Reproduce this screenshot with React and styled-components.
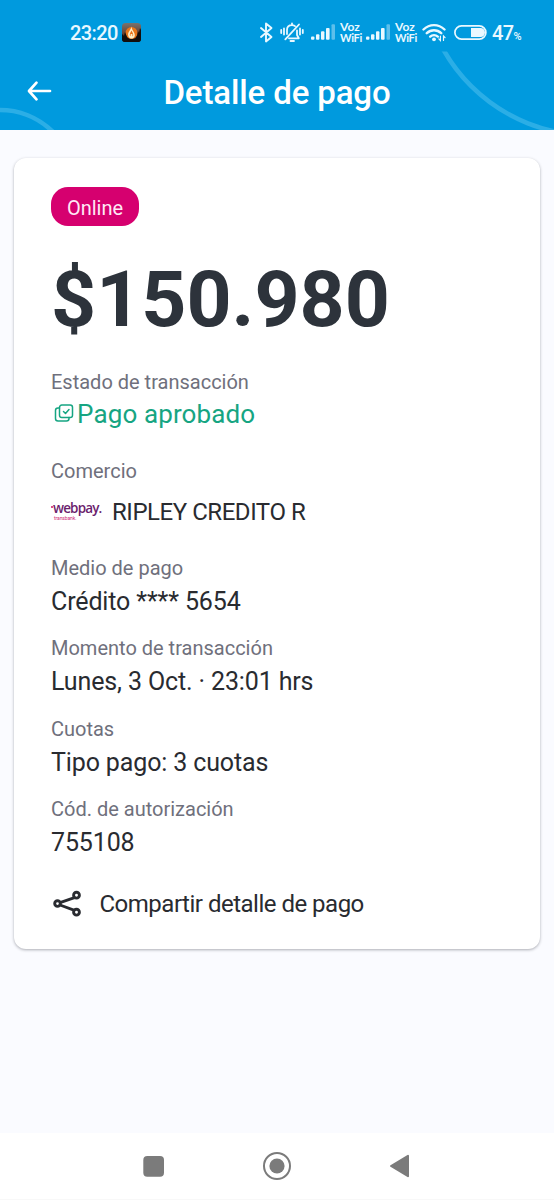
import React from "react";
import styled, { createGlobalStyle } from "styled-components";

const GlobalStyle = createGlobalStyle`
  * { box-sizing: border-box; }
  body { margin: 0; background: #fafbff; font-family: Roboto, "Liberation Sans", sans-serif; }
`;

const Screen = styled.div`
  width: 554px;
  height: 1200px;
  display: flex;
  flex-direction: column;
  overflow: hidden;
  background: #fafbff;
`;

const Header = styled.header`
  position: relative;
  height: 130px;
  flex: none;
  color: #fff;
  background: #009ade;
`;

const Decoration = styled.svg`
  position: absolute;
  inset: 0;
`;

const StatusBar = styled.div`
  position: relative;
  height: 52px;
  padding: 12px 27px 0 70px;
  display: flex;
  align-items: center;
  color: #e9f8ff;
`;

const Clock = styled.span`
  width: 52px;
  padding-top: 1px;
  font-size: 20px;
  font-weight: 500;
  line-height: 24px;
  letter-spacing: -0.6px;
`;

const StatusIcons = styled.div`
  margin-left: auto;
  display: flex;
  align-items: center;
`;

const Glyph = styled.svg`
  display: block;
  flex: none;
  margin-left: ${(p) => p.$gap || 0}px;
`;

const Voice = styled.span`
  width: 23px;
  margin-left: 4px;
  display: flex;
  flex-direction: column;
  font-family: Lato, sans-serif;
  white-space: nowrap;
`;

const VoiceLine = styled.span`
  height: 11px;
  line-height: 11px;
  font-size: ${(p) => p.$size}px;
  font-weight: 700;
  letter-spacing: ${(p) => p.$track}px;
`;

const Battery = styled.span`
  width: 35px;
  margin-left: 5px;
  padding-top: 1px;
  display: flex;
  align-items: baseline;
  font-size: 20px;
  font-weight: 500;
  white-space: nowrap;
  line-height: 24px;
  letter-spacing: -0.6px;
`;

const Percent = styled.small`
  font-size: 11px;
  line-height: 12px;
`;

const TitleBar = styled.div`
  position: relative;
  height: 80px;
  padding: 2px 0 0 27px;
  display: grid;
  grid-template-columns: 27px 1fr 54px;
  align-items: center;
`;

const BackIcon = styled.svg`
  display: block;
  margin-bottom: 4px;
`;

const Title = styled.h1`
  margin: 0;
  text-align: center;
  font-size: 33px;
  letter-spacing: -0.12px;
  font-weight: 500;
  line-height: 40px;
`;

const Card = styled.main`
  flex: none;
  height: 791px;
  margin: 28px 14px 0;
  padding: 29px 37px 0;
  display: flex;
  flex-direction: column;
  align-items: flex-start;
  background: #fff;
  border-radius: 12px;
  box-shadow: 0 1px 3px rgba(30, 34, 44, 0.36);
`;

const Badge = styled.span`
  width: 88px;
  height: 39px;
  border-radius: 17px;
  display: grid;
  place-items: center;
  padding-top: 2px;
  background: #d6006f;
  color: #ffe9f5;
  font-size: 20px;
`;

const Amount = styled.div`
  margin-top: 28px;
  height: 90px;
  line-height: 90px;
  font-size: 78.7px;
  font-weight: 700;
  color: #2d333b;
  white-space: nowrap;
`;

const Field = styled.section`
  margin-top: ${(p) => p.$gap}px;
`;

const Label = styled.div`
  height: 30px;
  line-height: 30px;
  font-size: 20px;
  color: #6f707c;
  white-space: nowrap;
`;

const Value = styled.div`
  display: flex;
  align-items: center;
  height: ${(p) => p.$height || 37}px;
  font-size: ${(p) => p.$size || 25}px;
  letter-spacing: ${(p) => p.$track ?? -0.13}px;
  color: ${(p) => p.$color || "#292b30"};
  white-space: nowrap;
`;

const Webpay = styled.span`
  position: relative;
  width: 61px;
  padding-left: 2px;
  display: flex;
  flex-direction: column;
  &::before {
    content: "";
    position: absolute;
    left: 0;
    top: 4px;
    width: 1.5px;
    height: 1.5px;
    border-radius: 50%;
    background: #cf2a78;
  }
`;

const WebpayName = styled.span`
  font: 600 13.5px/13px "Open Sans", sans-serif;
  letter-spacing: -0.85px;
  color: #6b1d6d;
`;

const WebpayOwner = styled.span`
  padding-left: 1px;
  font: 400 5px/6px Roboto, sans-serif;
  letter-spacing: -0.1px;
  color: #cf2a78;
`;

const Share = styled.button`
  margin: 22px 0 0;
  padding: 0;
  height: 41px;
  border: 0;
  background: none;
  display: flex;
  align-items: center;
  gap: 16.5px;
  font: 400 24px/30px Roboto, sans-serif;
  letter-spacing: -0.5px;
  color: #292b30;
  white-space: nowrap;
`;

const NavBar = styled.nav`
  flex: none;
  height: 67px;
  margin-top: auto;
  padding: 0 138px;
  display: flex;
  align-items: center;
  justify-content: space-between;
  background: #fff;
  border-bottom: 1px solid #f8f8f8;
`;

const Signal = ({ gap }) => (
  <Glyph $gap={gap} width="25" height="18" viewBox="0 0 25 18" fill="currentColor">
    <rect x="0" y="13.5" width="3.4" height="3.3" rx="1" />
    <rect x="5" y="11.300" width="3.400" height="5.500" rx="1" />
    <rect x="10" y="8.300" width="3.400" height="8.500" rx="1" />
    <rect x="15" y="5" width="3.600" height="11.800" rx="1" />
    <rect x="20.5" y="1.200" width="3.500" height="15.600" rx="1" opacity=".4" />
  </Glyph>
);

const VoiceWifi = () => (
  <Voice>
    <VoiceLine $size={12} $track={0}>Voz</VoiceLine>
    <VoiceLine $size={11} $track={-0.35}>WiFi</VoiceLine>
  </Voice>
);

const details = [
  { label: "Medio de pago", value: "Crédito **** 5654", gap: 15.5 },
  { label: "Momento de transacción", value: "Lunes, 3 Oct. · 23:01 hrs", gap: 13.5 },
  { label: "Cuotas", value: "Tipo pago: 3 cuotas", gap: 13.5 },
  { label: "Cód. de autorización", value: "755108", gap: 13.5 },
];

export default function App() {
  return (
    <Screen>
      <GlobalStyle />
      <Header>
        <Decoration width="554" height="130" fill="none" stroke="#2baee6" strokeWidth="4.6">
          <defs>
            <clipPath id="below-status"><rect y="51.5" width="554" height="78.5" /></clipPath>
          </defs>
          <g clipPath="url(#below-status)">
            <circle cx="0" cy="185" r="75" />
            <circle cx="589.7" cy="-32.8" r="167.9" />
          </g>
        </Decoration>
        <StatusBar>
          <Clock>23:20</Clock>
          <Glyph width="19" height="19" viewBox="0 0 19 19">
            <defs>
              <linearGradient id="dusk" x2="0" y2="1">
                <stop stopColor="#77736f" /><stop offset=".5" stopColor="#6b4636" /><stop offset="1" stopColor="#17100d" />
              </linearGradient>
            </defs>
            <rect width="19" height="19" rx="3.5" fill="url(#dusk)" />
            <circle cx="9.5" cy="10" r="6" fill="#e87519" />
            <path d="M0 11l2 2 1-4 2 5 2 2h6l2-3 1-5 1 2 1-5 1 2v9a3 3 0 0 1-3 3H3a3 3 0 0 1-3-3z" fill="#130e0c" />
            <path d="M9.4 3.5C9 7 5.5 9 6.2 12.5c.2 1.3 1.1 2.5 2.3 2.9h2c1.3-.6 2.2-1.7 2.3-3C13 9.4 9.8 7.5 9.4 3.5z" fill="#fff0c9" />
            <path d="M9.5 7.5c-.8 2-2 3-1.7 4.8l.8 1V11h1.800v2.400l.8-1c.3-1.800-1-2.900-1.700-4.900z" fill="#e86e16" />
          </Glyph>
          <StatusIcons>
            <Glyph width="15" height="21" viewBox="0 0 15 21" fill="none" stroke="currentColor" strokeWidth="1.9" strokeLinejoin="round" strokeLinecap="round">
              <path d="M2 6l10.500 9-5.500 4.500v-18L12.500 6 2 15" />
            </Glyph>
            <Glyph $gap={6} width="24" height="21" viewBox="0 0 24 21" fill="none" stroke="currentColor" strokeWidth="1.800" strokeLinecap="round" strokeLinejoin="round">
              <path d="M7 12V8c0-2.800 2-4.800 5-4.800 1.200 0 2.200.3 3 .9M12 3V1.500M17 8.500V13l1.800 3.300H9M5.300 17.300L19 2.500M10.500 19h3.500" />
              <path d="M4 6.500v6M1.200 8v3M20 6.500v6M22.800 8v3" />
            </Glyph>
            <Signal gap={7} />
            <VoiceWifi />
            <Signal gap={3} />
            <VoiceWifi />
            <Glyph $gap={4} width="25" height="19" viewBox="0 0 25 19" fill="none" stroke="currentColor" strokeWidth="2.400" strokeLinecap="round">
              <path d="M1.500 6.500C7.500.6 16.500.6 22.500 6.500M4.800 10.200c4.200-4 10.200-4 14.400 0M8.200 13.600c2.200-2 5.400-2 7.600 0" />
              <circle cx="12" cy="16.300" r="1.900" fill="currentColor" stroke="none" />
              <path d="M18.400 13v4.500l-1.600-1.600M21.500 17.500V13l1.600 1.600" strokeWidth="1.200" />
            </Glyph>
            <Glyph $gap={7} width="33" height="15" viewBox="0 0 33 15">
              <rect x=".9" y=".9" width="31" height="13.200" rx="6.600" fill="none" stroke="currentColor" strokeWidth="1.700" />
              <path d="M17 3h9.500a4.500 4.500 0 0 1 0 9H17z" fill="currentColor" />
            </Glyph>
            <Battery>47<Percent>%</Percent></Battery>
          </StatusIcons>
        </StatusBar>
        <TitleBar>
          <BackIcon width="25" height="22" viewBox="0 0 25 22" fill="none" stroke="#fff" strokeWidth="2.700" strokeLinecap="round" strokeLinejoin="round">
            <path d="M23 11H2.500M9.500 2.700L2 11l7.500 8.300" />
          </BackIcon>
          <Title>Detalle de pago</Title>
        </TitleBar>
      </Header>
      <Card>
        <Badge>Online</Badge>
        <Amount>$150.980</Amount>
        <Field $gap={23}>
          <Label>Estado de transacción</Label>
          <Value $height={33} $size={26} $track={0.13} $color="#16a582">
            <Glyph $gap={3} width="23" height="20" viewBox="0 0 23 20" fill="none" stroke="currentColor" strokeWidth="1.500" strokeLinecap="round" strokeLinejoin="round">
              <rect x="5.500" y="1" width="13" height="12.600" rx="2.300" />
              <path d="M5.500 4H4Q1.500 4 1.500 6.500v8Q1.500 17 4 17h8.500q2.500 0 2.500-2.500v-.9M9.500 7.500l2 2L15 5.500" />
            </Glyph>
            Pago aprobado
          </Value>
        </Field>
        <Field $gap={26}>
          <Label>Comercio</Label>
          <Value $height={51} $size={24} $track={-0.46}>
            <Webpay>
              <WebpayName>webpay.</WebpayName>
              <WebpayOwner>transbank.</WebpayOwner>
            </Webpay>
            RIPLEY CREDITO R
          </Value>
        </Field>
        {details.map((item) => (
          <Field key={item.label} $gap={item.gap}>
            <Label>{item.label}</Label>
            <Value>{item.value}</Value>
          </Field>
        ))}
        <Share type="button">
          <svg width="32" height="28" viewBox="0 0 32 28" fill="none" stroke="currentColor" strokeWidth="2.900">
            <path d="M9 12.700l14.500-5M9 15l14.500 5.300" />
            <circle cx="6.500" cy="13.600" r="2.800" />
            <circle cx="25.500" cy="5.200" r="2.900" />
            <circle cx="25.500" cy="22.200" r="2.900" />
          </svg>
          Compartir detalle de pago
        </Share>
      </Card>
      <NavBar>
        <svg width="30" height="30" viewBox="0 0 30 30" fill="#7b7b7b">
          <rect x="5.300" y="5" width="20.700" height="20.700" rx="4" />
        </svg>
        <svg width="30" height="30" viewBox="0 0 30 30" fill="#7b7b7b">
          <circle cx="15" cy="15" r="7.600" />
          <circle cx="15" cy="15" r="13" fill="none" stroke="#7b7b7b" strokeWidth="2" />
        </svg>
        <svg width="30" height="30" viewBox="0 0 30 30" fill="#7b7b7b" stroke="#7b7b7b" strokeWidth="2" strokeLinejoin="round">
          <path d="M5 15L22 4.800v20.400z" />
        </svg>
      </NavBar>
    </Screen>
  );
}
